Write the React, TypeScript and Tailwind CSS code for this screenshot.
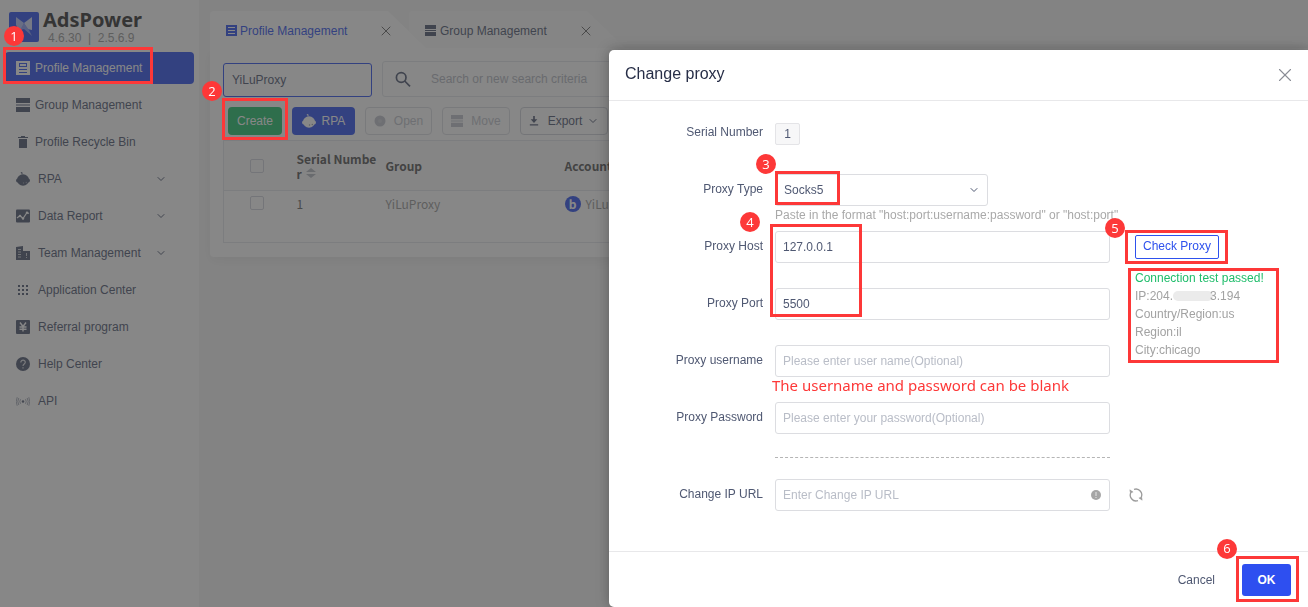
import React from "react";
import { LuChevronDown, LuX } from "react-icons/lu";

type IconProps = { className?: string };

function ProfileIcon({ className = "" }: IconProps) {
  return (
    <svg viewBox="0 0 14 14" className={className}>
      <path
        fill="currentColor"
        fillRule="evenodd"
        d="M0 0h14v14H0zM3 2h8v4H3zM4 3v2h6V3zM3 8h8v1H3zM3 11h8v1H3z"
      />
    </svg>
  );
}

function TabProfileIcon({ className = "" }: IconProps) {
  return (
    <svg viewBox="0 0 11 11" className={className}>
      <path fill="currentColor" fillRule="evenodd" d="M0 0h11v11H0zM2 2h7v1H2zM2 5h7v1H2zM2 8h7v1H2z" />
    </svg>
  );
}

function GroupIcon({ className = "" }: IconProps) {
  return (
    <svg viewBox="0 0 14 14" className={className} fill="currentColor">
      <path d="M0 0h14v5H0zM0 6.500h14v1H0zM0 9h14v5H0z" />
    </svg>
  );
}

function TrashIcon({ className = "" }: IconProps) {
  return (
    <svg viewBox="0 0 14 14" className={className} fill="currentColor">
      <path d="M5 1h4v1h3v1H2V2h3zM3 4h8v8.500q0 .5-.5.5h-7q-.5 0-.5-.5z" />
    </svg>
  );
}

function RobotIcon({ className = "" }: IconProps) {
  return (
    <svg viewBox="0 0 14 14" className={className} fill="currentColor">
      <path d="M5 0l1.500.5v1.800h-1V1.300L4.700 1z" />
      <ellipse cx="7" cy="8" rx="6" ry="5.800" />
      <rect y="6.500" width="14" height="4" rx="2" />
      <circle cx="7.500" cy="11" r=".7" fill="#9196a5" />
      <circle cx="10.300" cy="10.500" r=".7" fill="#9196a5" />
    </svg>
  );
}

function ChartIcon({ className = "" }: IconProps) {
  return (
    <svg viewBox="0 0 14 14" className={className} fill="none">
      <rect y=".5" width="14" height="13" rx="1" fill="currentColor" />
      <path d="M1 9l3-2.500 3 3 4-6 2 1" stroke="white" strokeWidth="1.200" />
      <circle cx="4" cy="7" r="1.200" fill="white" />
      <circle cx="7" cy="9.500" r="1.200" fill="white" />
      <circle cx="11" cy="3.800" r="1.200" fill="white" />
    </svg>
  );
}

function BuildingIcon({ className = "" }: IconProps) {
  return (
    <svg viewBox="0 0 14 14" className={className}>
      <path d="M0 1l7-1v5h7v9H0z" fill="currentColor" />
      <path
        d="M2 3h3v1H2zM2 5.500h3v1H2zM2 8h3v1H2zM2 10.500h3v1H2zM10 7h1v3h-1zM10 11h1v1h-1z"
        fill="white"
        fillOpacity=".7"
      />
    </svg>
  );
}

function GridIcon({ className = "" }: IconProps) {
  return (
    <svg viewBox="0 0 14 14" className={className} fill="currentColor">
      <path d="M2 2h2v2H2zM6 2h2v2H6zM10 2h2v2h-2zM2 6h2v2H2zM6 6h2v2H6zM10 6h2v2h-2zM2 10h2v2H2zM6 10h2v2H6zM10 10h2v2h-2z" />
    </svg>
  );
}

function YenIcon({ className = "" }: IconProps) {
  return (
    <svg viewBox="0 0 14 14" className={className} fill="none">
      <rect width="14" height="14" rx="1" fill="currentColor" />
      <path d="M4 2.500l3 4 3-4M7 6.500v5M3.500 7h7M3.500 9.300h7" stroke="white" strokeWidth="1.400" />
    </svg>
  );
}

function HelpIcon({ className = "" }: IconProps) {
  return (
    <svg viewBox="0 0 14 14" className={className} fill="none">
      <circle cx="7" cy="7" r="7" fill="currentColor" />
      <path
        d="M4.800 5.500C4.800 2.300 9.400 2.500 9.300 5.300 9.300 7 7 7 7 9M7 10.300v1.200"
        stroke="white"
        strokeOpacity=".8"
        strokeWidth="1.200"
      />
    </svg>
  );
}

function ApiIcon({ className = "" }: IconProps) {
  return (
    <svg viewBox="0 0 14 14" className={className} fill="none" stroke="currentColor" strokeWidth=".5">
      <circle cx="7" cy="7.500" r="1" fill="currentColor" />
      <path d="M4.500 5.200q-1.400 2.300 0 4.600M2.800 4q-2 3.500 0 7M1.200 3.200q-2 4.300 0 8.600M9.500 5.200q1.400 2.300 0 4.600M11.200 4q2 3.500 0 7M12.800 3.200q2 4.300 0 8.600" />
    </svg>
  );
}

function SearchIcon({ className = "" }: IconProps) {
  return (
    <svg viewBox="0 0 16 16" className={className} fill="none" stroke="currentColor" strokeWidth="1.700">
      <circle cx="6.200" cy="6.500" r="4.800" />
      <path d="M9.700 10l5.300 5.300" />
    </svg>
  );
}

function RefreshIcon({ className = "" }: IconProps) {
  return (
    <svg viewBox="0 0 14 14" className={className} fill="none" stroke="currentColor" strokeWidth="1.300">
      <path d="M5 1.400A5.800 5.800 0 0 1 11.800 10M9 12.600A5.800 5.800 0 0 1 2.200 4" />
      <path d="M.8 1.800l.5 2.800 2.800-.5zM13.200 12.200l-.5-2.800-2.800.5z" fill="currentColor" strokeWidth=".5" />
    </svg>
  );
}

const menu = [
  { label: "Profile Management", icon: ProfileIcon, active: true },
  { label: "Group Management", icon: GroupIcon },
  { label: "Profile Recycle Bin", icon: TrashIcon },
  { label: "RPA", icon: RobotIcon, wide: true, arrow: true },
  { label: "Data Report", icon: ChartIcon, wide: true, arrow: true },
  { label: "Team Management", icon: BuildingIcon, wide: true, arrow: true },
  { label: "Application Center", icon: GridIcon, wide: true },
  { label: "Referral program", icon: YenIcon, wide: true },
  { label: "Help Center", icon: HelpIcon, wide: true },
  { label: "API", icon: ApiIcon, wide: true },
];

// red numbered step marker
function Step({ n, className }: { n: number; className: string }) {
  return (
    <span
      className={`absolute z-20 flex size-5 items-center justify-center rounded-full bg-[#fd3838] font-['Open_Sans',sans-serif] text-[13px] leading-none text-white ${className}`}
    >
      {n}
    </span>
  );
}

function Frame({ className }: { className: string }) {
  return <span className={`pointer-events-none absolute z-20 border-3 border-[#fd3838] ${className}`} />;
}

function Sidebar() {
  return (
    <aside className="w-[199px] shrink-0 bg-white">
      <div className="relative flex h-[52px] gap-1 pt-3 pl-[9px]">
        <svg viewBox="0 0 30 30" className="size-[30px]">
          <rect width="30" height="30" rx="2" fill="#2e51ed" />
          <path d="M7 5l8 6-3 8-6 2 3-5-2-3z" fill="#b5c1f7" />
          <path d="M23 5l-8 6 3 6 5 1z" fill="#d5dcfb" />
          <path d="M15 11l-4 7 4-1 8 7-3-6z" fill="#8a9cf4" />
        </svg>
        <div className="-mt-1">
          <div className="font-['Noto_Sans',sans-serif] text-xl leading-6 font-bold text-[#333]">AdsPower</div>
          <div className="pl-[5px] text-xs leading-3 whitespace-pre text-[#999]">4.6.30  |  2.5.6.9</div>
        </div>
        <Step n={1} className="top-[26px] left-1" />
      </div>
      <nav className="relative flex flex-col gap-[5px] px-[5px]">
        {menu.map((item) => {
          const Icon = item.icon;
          return (
            <a
              key={item.label}
              href="#"
              className={`flex h-8 items-center rounded pl-[11px] ${item.wide ? "gap-2" : "gap-[5px]"} ${
                item.active ? "bg-[#2e51ed] text-white" : "text-[#4f5872]"
              }`}
            >
              <Icon className="size-[14px]" />
              <span className="flex-1">{item.label}</span>
              {item.arrow && <LuChevronDown className="mr-[27px] size-3" />}
            </a>
          );
        })}
        <Frame className="-top-[5px] left-[3px] h-[37px] w-[150px]" />
      </nav>
    </aside>
  );
}

function Tabs() {
  return (
    <div className="flex h-[37px]">
      <div className="z-[1] flex w-[216px] items-center rounded-tl bg-white pt-0.5 pl-4 text-[#2e51ed] [clip-path:polygon(0_0,178px_0,100%_100%,0_100%)]">
        <TabProfileIcon className="mr-[3px] size-[11px]" />
        <span className="w-[138px]">Profile Management</span>
        <button aria-label="Close Profile Management">
          <LuX className="size-4 text-[#666]" strokeWidth={1.5} />
        </button>
      </div>
      <div className="-ml-[17px] flex w-[216px] items-center rounded-tl bg-[#fafafa] pt-0.5 pl-4 text-[#4f5872] [clip-path:polygon(0_0,178px_0,100%_100%,0_100%)]">
        <GroupIcon className="mr-1 size-[11px]" />
        <span className="w-[138px]">Group Management</span>
        <button aria-label="Close Group Management">
          <LuX className="size-4 text-[#666]" strokeWidth={1.5} />
        </button>
      </div>
    </div>
  );
}

function Toolbar() {
  return (
    <div className="relative mt-[10px] flex h-7 gap-[10px] pl-[5px]">
      <button className="w-[54px] rounded-sm bg-[#21c06d] text-white">Create</button>
      <button className="flex w-[63px] items-center justify-center gap-[6px] rounded-sm bg-[#2e51ed] text-white">
        <RobotIcon className="size-[14px]" />
        RPA
      </button>
      <button className="flex w-[67px] items-center justify-center gap-2 rounded-sm border border-[#dcdee4] text-[#c0c4cc]" disabled>
        <svg viewBox="0 0 12 12" className="size-3" fill="currentColor">
          <circle cx="6" cy="6" r="5.500" />
          <circle cx="6" cy="6" r="2" fill="#cdd0d6" />
        </svg>
        Open
      </button>
      <button className="flex w-[68px] items-center justify-center gap-2 rounded-sm border border-[#dcdee4] text-[#c0c4cc]" disabled>
        <GroupIcon className="size-3" />
        Move
      </button>
      <button className="flex w-[88px] items-center justify-center gap-[5px] rounded-sm border border-[#cfd2da] text-[#4f5872]">
        <svg viewBox="0 0 12 12" className="mr-1 size-[10px]" fill="currentColor">
          <path d="M5 0h2v4h3L6 8.500 2 4h3zM1 10h10v1.500H1z" />
        </svg>
        Export
        <LuChevronDown className="size-3" />
      </button>
      <Step n={2} className="-top-[26px] -left-[21px]" />
      <Frame className="-top-[9px] -left-px h-[42px] w-[66px]" />
    </div>
  );
}

function ProfileTable() {
  return (
    <table className="mt-[5px] w-full table-fixed border border-[#e4e6ec] text-left font-['Noto_Sans_CJK_SC',sans-serif] text-xs leading-4">
      <thead className="bg-[#fafafa] text-[#555]">
        <tr className="h-[50px] border-b border-[#e4e6ec]">
          <th className="w-[73px] pl-[26px]">
            <input
              type="checkbox"
              aria-label="Select all"
              className="block size-[14px] appearance-none rounded-xs border border-[#d0d3db]"
            />
          </th>
          <th className="w-[89px] leading-[15px] font-bold">
            Serial Numbe
            <br />
            <span className="flex items-center gap-1">
              r
              <svg viewBox="0 0 10 10" className="size-[10px]" fill="#b5b8c0">
                <path d="M0 4l5-4 5 4zM0 6h10l-5 4z" />
              </svg>
            </span>
          </th>
          <th className="w-[179px] font-bold">Group</th>
          <th className="font-bold">Account</th>
        </tr>
      </thead>
      <tbody>
        <tr className="h-[52px] text-[#999]">
          <td className="pt-[5px] pl-[26px] align-top">
            <input
              type="checkbox"
              aria-label="Select profile 1"
              className="block size-[14px] appearance-none rounded-xs border border-[#d0d3db]"
            />
          </td>
          <td className="pt-[5px] align-top text-[#666]">1</td>
          <td className="pt-[5px] align-top">YiLuProxy</td>
          <td className="pt-[5px] align-top">
            <span className="flex items-center gap-[5px]">
              <span className="flex size-4 items-center justify-center rounded-full bg-[#2e51ed] font-bold text-white">b</span>
              YiLuProxy
            </span>
          </td>
        </tr>
      </tbody>
    </table>
  );
}

const labelClass = "flex h-[57px] items-center justify-end pb-[27px]";
const inputClass =
  "block h-8 w-full rounded-[3px] border border-[#dcdde1] bg-white px-[7px] text-[#4f5872] outline-none placeholder:text-[#b9bdc7]";

function ChangeProxy() {
  return (
    <div
      role="dialog"
      aria-label="Change proxy"
      className="relative flex w-[699px] max-w-full flex-col rounded-l-[5px] bg-white text-[#4f5872] shadow-[0_0_14px_rgba(0,0,0,0.3)]"
    >
      <header className="flex h-[51px] items-center justify-between border-b border-[#e8e8ea] pr-3 pl-4">
        <h2 className="pb-[3px] text-base text-[#272e47]">Change proxy</h2>
        <button aria-label="Close">
          <LuX className="size-[22px] text-[#8a8d96]" strokeWidth={1.2} />
        </button>
      </header>

      <form className="grid flex-1 grid-cols-[154px_335px_1fr] content-start gap-x-3 pt-4">
        <span className={labelClass}>Serial Number</span>
        <div className="col-span-2 flex h-8 items-center">
          <span className="mt-0.5 flex h-[22px] w-[25px] items-center justify-center rounded-xs border border-[#e4e4e7] bg-[#f7f7f8]">
            1
          </span>
        </div>

        <label htmlFor="type" className={labelClass}>Proxy Type</label>
        <div className="relative col-span-2">
          <div className="relative w-[213px]">
            <select
              id="type"
              className="block h-8 w-full appearance-none rounded-[3px] border border-[#dcdde1] bg-white px-2 text-[#4f5872]"
            >
              <option>Socks5</option>
            </select>
            <LuChevronDown className="pointer-events-none absolute top-[10px] right-2 size-3" />
          </div>
          <p className="leading-[18px] text-[#a9a9a9]">Paste in the format "host:port:username:password" or "host:port"</p>
          <Step n={3} className="-top-5 -left-[19px]" />
          <Frame className="-top-[3px] left-0 h-[34px] w-[65px]" />
        </div>

        <label htmlFor="host" className={labelClass}>Proxy Host</label>
        <div className="relative">
          <input id="host" className={inputClass} defaultValue="127.0.0.1" />
          <Step n={4} className="-top-[19px] -left-[35px]" />
          <Frame className="-top-[7px] -left-[5px] h-[93px] w-[92px]" />
        </div>
        <div className="relative row-span-3 pt-1 pl-[13px]">
          <button type="button" className="block h-6 w-[84px] rounded-xs border border-[#2e51ed] pb-0.5 text-[#2e51ed]">
            Check Proxy
          </button>
          <div className="mt-[10px] leading-[18px] text-[#a2a2a2]">
            <p className="text-[#1fbd6b]">Connection test passed!</p>
            <p className="flex items-center">
              IP:204.
              <span className="h-[10px] w-10 rounded-full bg-[#ebebeb]" />
              <span className="-ml-[3px]">3.194</span>
            </p>
            <p>Country/Region:us</p>
            <p>Region:il</p>
            <p>City:chicago</p>
          </div>
          <Step n={5} className="-top-[13px] -left-[17px]" />
          <Frame className="-top-px left-[3px] h-[34px] w-[103px]" />
          <Frame className="top-[37px] left-[6px] h-[95px] w-[151px]" />
        </div>

        <label htmlFor="port" className={labelClass}>Proxy Port</label>
        <input id="port" className={inputClass} defaultValue="5500" />

        <label htmlFor="user" className={labelClass}>Proxy username</label>
        <div className="relative">
          <input id="user" className={inputClass} placeholder="Please enter user name(Optional)" />
          <p className="absolute top-[30px] -left-[3px] font-['Noto_Sans',sans-serif] text-[15px] leading-5 whitespace-nowrap text-[#fd3838]">
            The username and password can be blank
          </p>
        </div>

        <label htmlFor="password" className={labelClass}>Proxy Password</label>
        <input
          id="password"
          type="password"
          className={inputClass}
          placeholder="Please enter your password(Optional)"
        />

        <div className="col-start-2 -mt-0.5 mb-[21px] border-t border-dashed border-[#b5b5b5]" />

        <label htmlFor="url" className="col-start-1 flex h-[30px] items-center justify-end">Change IP URL</label>
        <div className="relative">
          <input id="url" className={inputClass} placeholder="Enter Change IP URL" />
          <svg viewBox="0 0 10 10" className="absolute top-[11px] right-[9px] size-[10px]">
            <circle cx="5" cy="5" r="5" fill="#a6a6a6" />
            <path d="M5 2v4M5 7v1" stroke="white" strokeOpacity=".6" strokeWidth="1.200" />
          </svg>
        </div>
        <button type="button" aria-label="Refresh" className="flex h-8 items-center pl-[7px] text-[#9b9b9b]">
          <RefreshIcon className="size-[14px]" />
        </button>
      </form>

      <footer className="flex h-14 items-center justify-end gap-[27px] border-t border-[#e8e8ea] pr-[17px]">
        <button>Cancel</button>
        <div className="relative">
          <button className="block h-8 w-[49px] rounded-[3px] bg-[#2e4ff0] font-bold text-white">OK</button>
          <Step n={6} className="-top-[25px] -left-[25px]" />
          <Frame className="-top-2 -left-[6px] h-[46px] w-[63px]" />
        </div>
      </footer>
    </div>
  );
}

export default function App() {
  return (
    <div className="relative flex min-h-screen overflow-hidden bg-[#f6f6f6] font-['Liberation_Sans',Arial,sans-serif] text-xs">
      <Sidebar />
      <main className="min-w-0 flex-1 pt-[11px] pl-[11px]">
        <Tabs />
        <section className="rounded-b bg-white px-[13px] pt-[13px] pb-[14px] shadow-[0_4px_12px_rgba(0,0,0,0.06)]">
          <div className="flex items-end gap-[10px]">
            <input
              aria-label="Group"
              defaultValue="YiLuProxy"
              className="h-[34px] w-[149px] rounded-[3px] border border-[#2e51ed] px-2 text-[#4f5872]"
            />
            <label className="flex h-9 flex-1 items-center gap-5 rounded-[3px] border border-[#e4e6ec] pl-3 text-[#4f5872]">
              <SearchIcon className="size-4" />
              <input
                className="flex-1 outline-none placeholder:text-[#b4b8c2]"
                placeholder="Search or new search criteria"
                aria-label="Search"
              />
            </label>
          </div>
          <Toolbar />
          <ProfileTable />
        </section>
      </main>

      <div className="fixed inset-0 z-10 flex justify-end bg-[#373737]/60 pt-[50px]">
        <ChangeProxy />
      </div>
    </div>
  );
}
